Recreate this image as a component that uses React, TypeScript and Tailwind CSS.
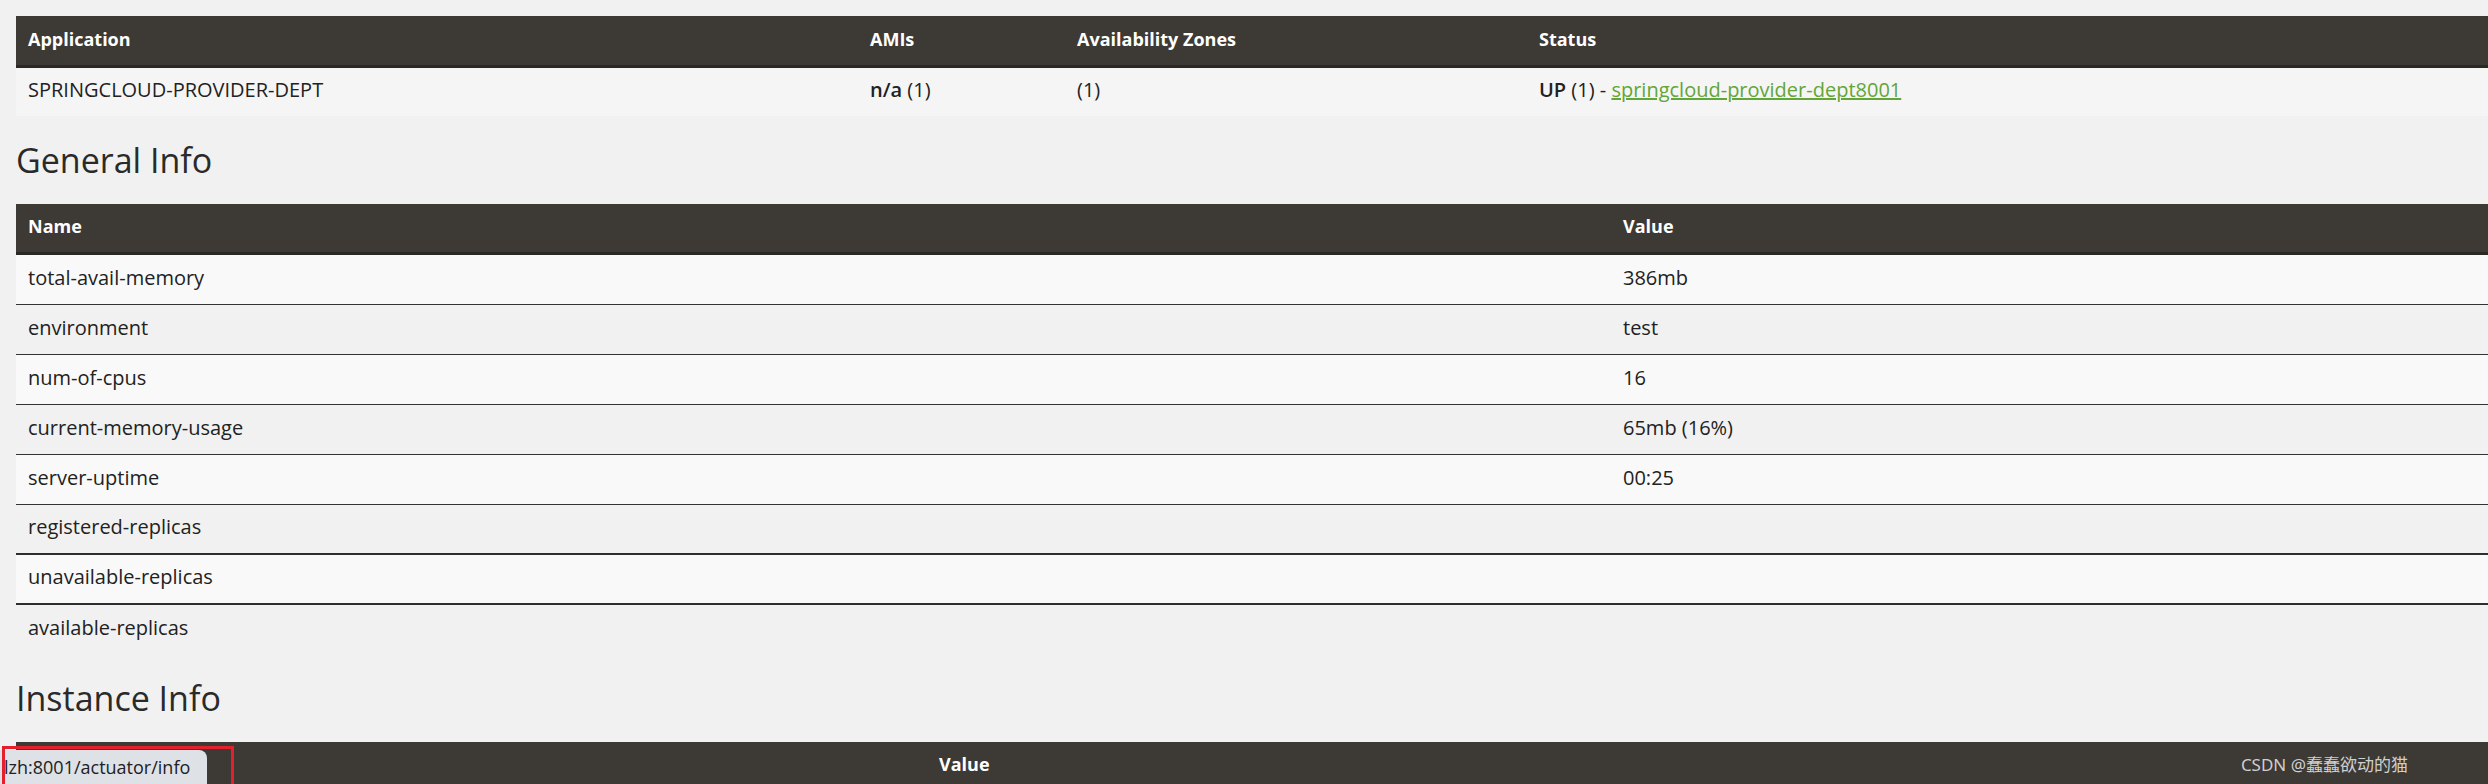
const generalInfo = [
  { name: 'total-avail-memory', value: '386mb' },
  { name: 'environment', value: 'test' },
  { name: 'num-of-cpus', value: '16' },
  { name: 'current-memory-usage', value: '65mb (16%)' },
  { name: 'server-uptime', value: '00:25' },
  { name: 'registered-replicas', value: '', thick: true },
  { name: 'unavailable-replicas', value: '', thick: true },
  { name: 'available-replicas', value: '', last: true },
]

function Heading({ children }: { children: string }) {
  return (
    <h2 className="mt-[26px] mb-[25px] h-[37px] text-[34px] leading-[37px] font-normal text-[#2a2a2a]">
      {children}
    </h2>
  )
}

function HeadCell({ children }: { children?: string }) {
  return (
    <div className="flex items-center px-3 pb-[3px] text-[18px] font-bold text-white">
      {children}
    </div>
  )
}

function Cell({ children }: { children?: React.ReactNode }) {
  return <div className="flex items-center px-3 pb-1">{children}</div>
}

export default function App() {
  return (
    <div className="relative h-[784px] overflow-hidden bg-[#f1f1f1] pt-4 pl-4 font-['Open_Sans',sans-serif] text-[20px] text-[#222]">
      {/* application table */}
      <div>
        <div className="grid h-[52px] grid-cols-[842px_207px_462px_1fr] border-b-[3px] border-[#2b2926] bg-[#3d3935]">
          <HeadCell>Application</HeadCell>
          <HeadCell>AMIs</HeadCell>
          <HeadCell>Availability Zones</HeadCell>
          <HeadCell>Status</HeadCell>
        </div>
        <div className="grid h-[48px] grid-cols-[842px_207px_462px_1fr] bg-[#f5f5f5]">
          <Cell>SPRINGCLOUD-PROVIDER-DEPT</Cell>
          <Cell>
            <b className="font-semibold">n/a</b>&nbsp;(1)
          </Cell>
          <Cell>(1)</Cell>
          <Cell>
            <b className="font-semibold">UP</b>&nbsp;(1) -&nbsp;
            <a href="#" className="text-[#63a537] underline">
              springcloud-provider-dept8001
            </a>
          </Cell>
        </div>
      </div>

      <Heading>General Info</Heading>

      <div>
        <div className="grid h-[51px] grid-cols-[1595px_1fr] border-b-[3px] border-[#2b2926] bg-[#3d3935]">
          <HeadCell>Name</HeadCell>
          <HeadCell>Value</HeadCell>
        </div>
        {generalInfo.map((row, i) => (
          <div
            key={row.name}
            className={
              'grid grid-cols-[1595px_1fr] ' +
              (i % 2 === 0 ? 'bg-[#f9f9f9] ' : '') +
              (row.last
                ? 'h-[49px]'
                : row.thick
                  ? 'h-[50px] border-b-2 border-[#2e2e2e]'
                  : 'h-[50px] border-b border-[#333]')
            }
          >
            <Cell>{row.name}</Cell>
            <Cell>{row.value}</Cell>
          </div>
        ))}
      </div>

      <Heading>Instance Info</Heading>

      <div className="grid h-[51px] grid-cols-[911px_1fr] border-b-[3px] border-[#2b2926] bg-[#3d3935]">
        <HeadCell>Name</HeadCell>
        <HeadCell>Value</HeadCell>
      </div>

      {/* browser status bubble */}
      <div className="absolute bottom-0 left-0 flex h-[34px] w-[207px] items-center overflow-hidden rounded-tr-lg bg-[#dee1e6] pl-1 text-[18px] whitespace-nowrap text-[#202124]">
        lzh:8001/actuator/info
      </div>
      <div className="absolute top-[746px] left-[2px] h-[44px] w-[232px] border-[3px] border-[#e3202b]" />

      {/* watermark */}
      <div className="absolute top-[752px] right-[80px] font-['Noto_Sans','Noto_Sans_CJK_SC',sans-serif] text-[17px] text-[#cfcfcf]">
        CSDN @蠢蠢欲动的猫
      </div>
    </div>
  )
}
